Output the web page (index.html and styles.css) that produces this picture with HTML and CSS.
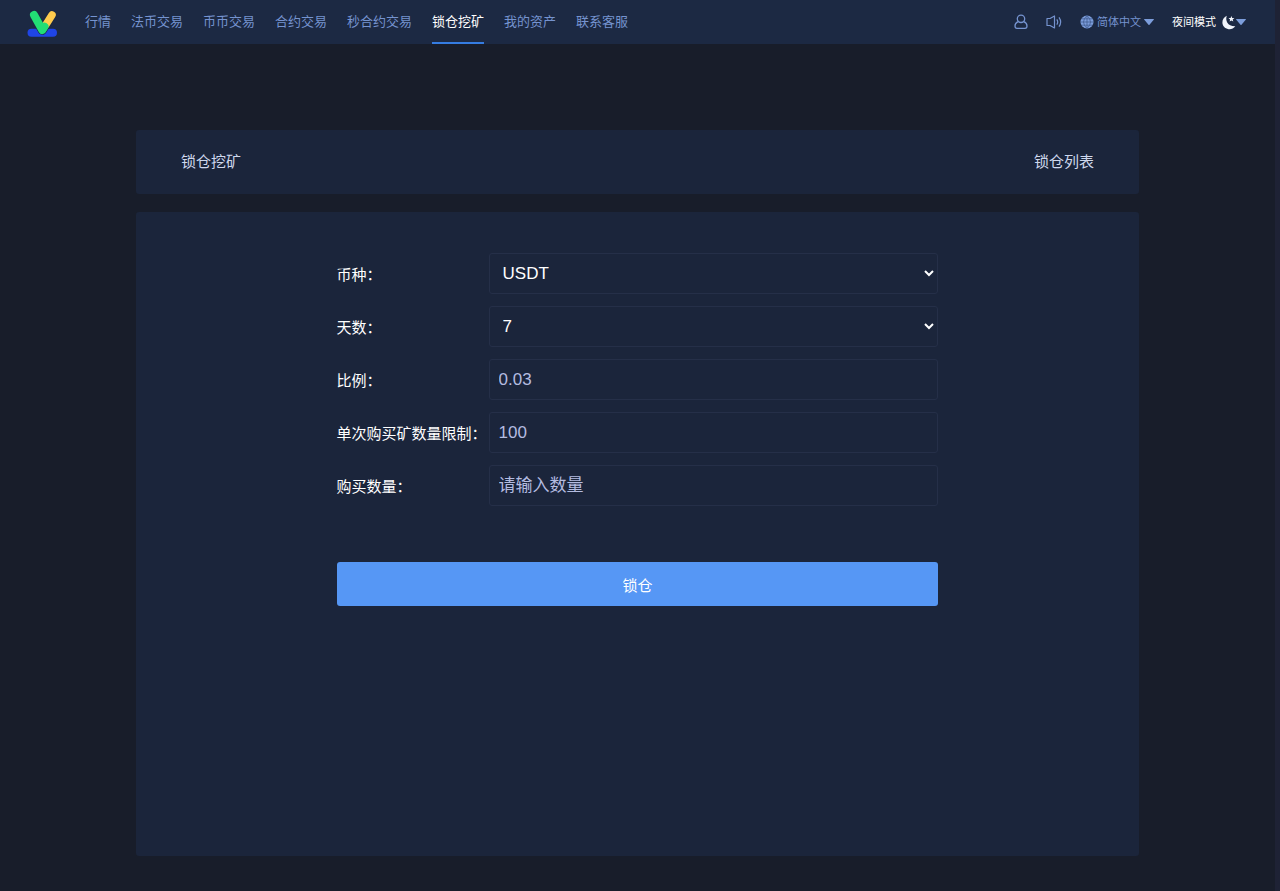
FILE: index.html
```
<!DOCTYPE html>
<html lang="zh-CN">
<head>
<meta charset="utf-8">
<meta name="viewport" content="width=device-width, initial-scale=1">
<title>锁仓挖矿</title>
<link rel="stylesheet" href="styles.css">
</head>
<body>
<header class="header">
  <a class="logo" href="#" aria-label="首页">
    <svg width="32" height="30" viewBox="0 0 32 30" fill="none" stroke-linecap="round" stroke-linejoin="round">
      <path d="M5.500 24.800H27" stroke="#1f45e6" stroke-width="8"/>
      <path d="M8 7L16.300 22L26 7" stroke="#1c2943" stroke-width="9.500"/>
      <path d="M26 7L20 16.500" stroke="#ffcb4d" stroke-width="7.500"/>
      <path d="M8 7L16.300 22L18.500 18.600" stroke="#22de75" stroke-width="8"/>
    </svg>
  </a>
  <nav class="nav">
    <a href="#">行情</a>
    <a href="#">法币交易</a>
    <a href="#">币币交易</a>
    <a href="#">合约交易</a>
    <a href="#">秒合约交易</a>
    <a class="active" href="#" aria-current="page">锁仓挖矿</a>
    <a href="#">我的资产</a>
    <a href="#">联系客服</a>
  </nav>
  <div class="tools">
    <button class="tool" type="button" aria-label="账户">
      <svg width="14" height="16" viewBox="0 0 14 16" fill="none" stroke="currentColor" stroke-width="1.300">
        <circle cx="7" cy="4.800" r="3.700"/>
        <path d="M4.300 7.600C2 8.500 1 10 1 12C1 13.800 1.600 14.400 3 14.400H11C12.400 14.400 13 13.800 13 12C13 10 12 8.500 9.700 7.600"/>
      </svg>
    </button>
    <button class="tool" type="button" aria-label="公告">
      <svg width="16" height="14" viewBox="0 0 16 14" fill="none" stroke="currentColor" stroke-width="1.200" stroke-linejoin="round">
        <path d="M1 3.500H4L8.500 1V13L4 10.500H1Z"/>
        <path d="M10.800 4.300Q12.600 7 10.800 9.700M13 2.300Q16.300 7 13 11.700"/>
      </svg>
    </button>
    <button class="tool language" type="button">
      <svg width="14" height="14" viewBox="0 0 14 14">
        <circle cx="7" cy="7" r="6.500" fill="#7c9ddb"/>
        <path d="M7 0.500V13.500M0.500 7H13.500M1.500 3.800H12.500M1.500 10.200H12.500M7 .5Q0 7 7 13.500M7 .5Q14 7 7 13.500" fill="none" stroke="#3d588b" stroke-width=".7"/>
      </svg>
      <span>简体中文</span>
      <svg width="10" height="6" viewBox="0 0 10 6"><path d="M.5 0H9.500Q10.200 0 9.700 .7L5.500 5.700Q5 6.200 4.500 5.700L.3 .7Q-.2 0 .5 0Z" fill="#7c9ddb"/></svg>
    </button>
    <button class="tool theme" type="button">
      <span>夜间模式</span>
      <svg class="moon" width="14" height="16" viewBox="0 0 14 16" fill="#f1f4fb">
        <path d="M4.800 1.800C3 6.500 5.500 12.500 13.300 12.300C11.500 14.700 9 15.600 6.500 15.200C2.800 14.600 .4 11.800 .4 8.500C.4 5.500 2 3 4.800 1.800Z"/>
        <path d="M9.400 2L10.200 4L12.400 4.100L10.700 5.500L11.300 7.600L9.400 6.400L7.600 7.600L8.100 5.500L6.500 4.100L8.600 4Z"/>
      </svg>
      <svg width="10" height="6" viewBox="0 0 10 6"><path d="M.5 0H9.500Q10.200 0 9.700 .7L5.500 5.700Q5 6.200 4.500 5.700L.3 .7Q-.2 0 .5 0Z" fill="#7c9ddb"/></svg>
    </button>
  </div>
</header>
<main class="content">
  <div class="panel title-bar">
    <h1>锁仓挖矿</h1>
    <a href="#">锁仓列表</a>
  </div>
  <section class="panel form-panel">
    <form class="form">
      <div class="row">
        <label for="coin">币种：</label>
        <select id="coin"><option>USDT</option></select>
      </div>
      <div class="row">
        <label for="days">天数：</label>
        <select id="days"><option>7</option></select>
      </div>
      <div class="row">
        <label for="ratio">比例：</label>
        <input id="ratio" type="text" placeholder="0.03">
      </div>
      <div class="row">
        <label for="limit">单次购买矿数量限制：</label>
        <input id="limit" type="text" placeholder="100">
      </div>
      <div class="row">
        <label for="amount">购买数量：</label>
        <input id="amount" type="text" placeholder="请输入数量">
      </div>
      <button class="submit" type="submit">锁仓</button>
    </form>
  </section>
</main>
</body>
</html>
```
FILE: styles.css
```
* {
  box-sizing: border-box;
}

body {
  margin: 0;
  min-height: 100vh;
  display: flex;
  flex-direction: column;
  background: #181d2a;
  border-right: 5px solid #1e2235;
  color: #fff;
  font-family: "Liberation Sans", "Noto Sans CJK SC", sans-serif;
  font-size: 15px;
}

a {
  color: inherit;
  text-decoration: none;
}

svg {
  display: block;
  flex: none;
}

button,
input,
select {
  font-family: inherit;
}

.header {
  display: flex;
  align-items: center;
  height: 44px;
  padding: 0 29px 0 26px;
  background: #1c2943;
  color: #7593cf;
}

.logo {
  padding-top: 2px;
}

.nav {
  display: flex;
  align-self: stretch;
  gap: 20px;
  margin-left: 27px;
  font-size: 13px;
  line-height: 44px;
  white-space: nowrap;
}

.nav .active {
  color: #fff;
  box-shadow: inset 0 -2px #357ce1;
}

.tools {
  display: flex;
  align-items: center;
  gap: 18px;
  margin-left: auto;
}

.tool {
  display: flex;
  align-items: center;
  padding: 0;
  border: 0;
  background: none;
  color: inherit;
  font-size: 11px;
  line-height: 18px;
  white-space: nowrap;
  cursor: pointer;
}

.language {
  gap: 3px;
}

.theme {
  color: #fff;
}

.moon {
  margin-left: 6px;
}

.content {
  flex: 1;
  display: flex;
  flex-direction: column;
  gap: 18px;
  width: 92%;
  max-width: 1003px;
  margin: 0 auto;
  padding: 86px 0 35px;
}

.panel {
  background: #1b253b;
  border-radius: 3px;
}

.title-bar {
  display: flex;
  align-items: center;
  justify-content: space-between;
  padding: 20px 45px;
  color: #cfd8ed;
  line-height: 24px;
}

.title-bar h1 {
  margin: 0;
  font-size: 15px;
  font-weight: 400;
}

.form-panel {
  flex: 1;
  padding: 41px 0;
}

.form {
  display: flex;
  flex-direction: column;
  gap: 12px;
  width: 60%;
  min-width: 480px;
  margin: 0 auto;
}

.row {
  display: grid;
  grid-template-columns: 152px 1fr;
  align-items: center;
}

.row label {
  white-space: nowrap;
}

.row input,
.row select {
  width: 100%;
  height: 41px;
  padding: 0 9px;
  border: 1px solid #252f48;
  border-radius: 3px;
  background: #1b253b;
  color: #fff;
  font-size: 17px;
}

.row input::placeholder {
  color: #b4bce0;
  opacity: 1;
}

.row select {
  padding: 0 0 0 9px;
}

.submit {
  height: 44px;
  margin-top: 44px;
  border: 0;
  border-radius: 3px;
  background: #5697f5;
  color: #fff;
  font-size: 15px;
  cursor: pointer;
}
```
